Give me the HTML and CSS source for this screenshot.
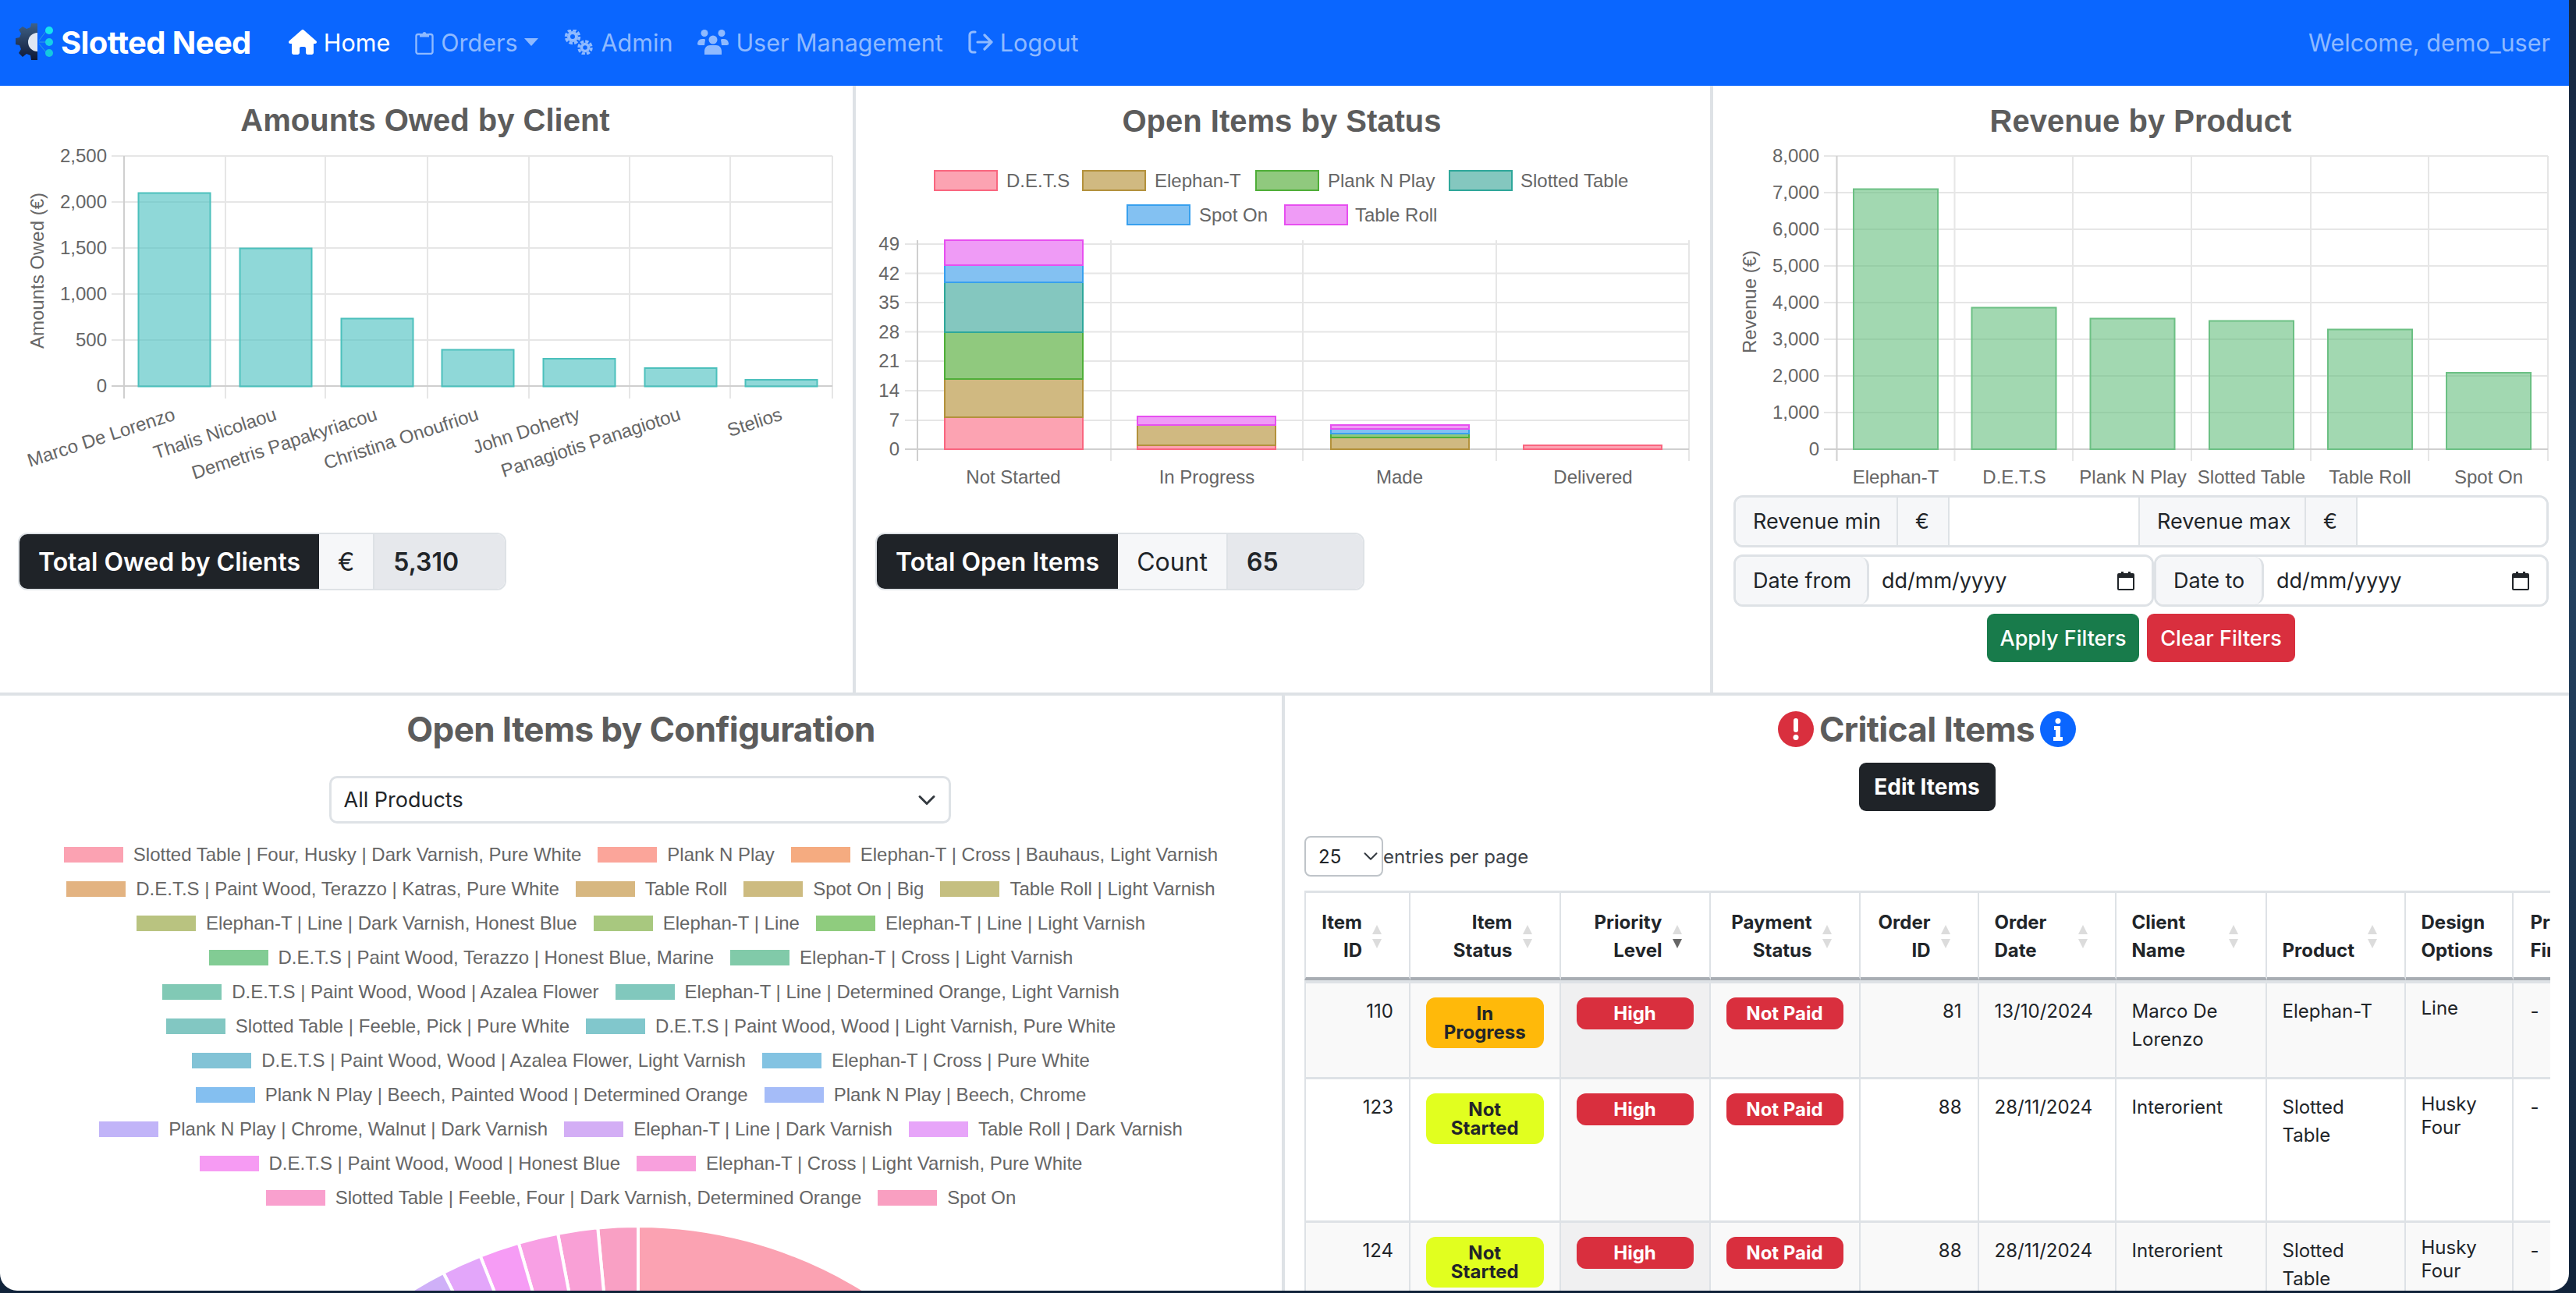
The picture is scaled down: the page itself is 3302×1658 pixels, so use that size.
FILE: index.html
```
<!DOCTYPE html>
<html lang="en">
<head>
<meta charset="utf-8">
<title>Slotted Need</title>
<link rel="stylesheet" href="styles.css">
</head>
<body>
<div class="window">
  <nav class="navbar">
    <a class="brand">
      <svg class="logo" viewBox="20 30 50 48" width="50" height="48">
        <defs><linearGradient id="lg" x1="0" y1="0" x2="0" y2="1"><stop offset="0" stop-color="#3f6185"/><stop offset="1" stop-color="#0d1736"/></linearGradient></defs>
        <path fill="url(#lg)" d="M48 30V77H40L39 71 34 69 29 73 24 68 27 63 25 58 20 57V49L25 48 27 43 24 38 29 34 34 37 39 35 40 30Z"/>
        <path fill="#dfe7f3" d="M48 42V66A12 12 0 0 1 48 42Z"/>
        <path stroke="#2f9fe0" stroke-width="1" fill="none" d="M50 52 59 40M50 54H59M50 56 59 67"/>
        <circle cx="63" cy="39" r="5" fill="#16e3f0"/><circle cx="63" cy="54" r="5" fill="#16cfe8"/><circle cx="63" cy="68" r="5" fill="#14c8e0"/>
      </svg>
      <span>Slotted Need</span>
    </a>
    <ul class="nav-list">
      <li class="nav-link active">
        <svg class="ic-home" viewBox="0 0 576 512" width="36" height="32"><path fill="currentColor" d="M575.8 255.5c0 18-15 32.1-32 32.1h-32l.7 160.2c0 2.7-.2 5.4-.5 8.1V472c0 22.1-17.9 40-40 40H456c-1.1 0-2.2 0-3.3-.1c-1.4 .1-2.8 .1-4.2 .1H416 392c-22.1 0-40-17.9-40-40V448 384c0-17.7-14.3-32-32-32H256c-17.7 0-32 14.3-32 32v64 24c0 22.1-17.9 40-40 40H160 128.1c-1.5 0-3-.1-4.5-.2c-1.2 .1-2.4 .2-3.6 .2H104c-22.1 0-40-17.9-40-40V360c0-.9 0-1.9 .1-2.8V287.6H32c-18 0-32-14-32-32.1c0-9 3-17 10-24L266.4 8c7-7 15-8 22-8s15 2 21 7L564.8 231.5c8 7 12 15 11 24z"/></svg>
        <span>Home</span>
      </li>
      <li class="nav-link">
        <svg viewBox="0 0 24 32" width="24" height="32"><path fill="none" stroke="currentColor" stroke-width="2.4" d="M6.5 6H4a2.5 2.5 0 0 0-2.5 2.5v20A2.5 2.5 0 0 0 4 31h16a2.5 2.5 0 0 0 2.5-2.5v-20A2.5 2.5 0 0 0 20 6h-2.500"/><path fill="currentColor" d="M6 5h3.500a2.600 2.600 0 0 1 5 0H18v4.500H6z"/></svg>
        <span>Orders</span>
        <i class="caret"></i>
      </li>
      <li class="nav-link">
        <svg viewBox="0 0 40 32" width="40" height="32" fill="none" stroke="currentColor"><circle cx="12" cy="9" r="5" stroke-width="4"/><circle cx="12" cy="9" r="8.500" stroke-width="3.500" stroke-dasharray="4.500 2.170"/><circle cx="28" cy="23" r="4.500" stroke-width="3.500"/><circle cx="28" cy="23" r="8" stroke-width="3.500" stroke-dasharray="4.200 2.080"/></svg>
        <span>Admin</span>
      </li>
      <li class="nav-link">
        <svg viewBox="0 0 40 32" width="40" height="32" fill="currentColor"><circle cx="9" cy="4.500" r="4.500"/><circle cx="31" cy="4.500" r="4.500"/><circle cx="20" cy="13" r="5.500"/><path d="M0 19c0-4 2-7 6-7h3l1 1-1 7H2zM40 19c0-4-2-7-6-7h-3l-1 1 1 7h7zM9 32v-4c0-5 3-8 7-8h8c4 0 7 3 7 8v4z"/></svg>
        <span>User Management</span>
      </li>
      <li class="nav-link">
        <svg viewBox="0 0 32 32" width="32" height="32" fill="none" stroke="currentColor" stroke-width="3.200" stroke-linecap="round" stroke-linejoin="round"><path d="M9 3H6a4 4 0 0 0-4 4v18a4 4 0 0 0 4 4h3M12 16H30M21 7l9 9-9 9"/></svg>
        <span>Logout</span>
      </li>
    </ul>
    <span class="welcome">Welcome, demo_user</span>
  </nav>

  <section class="row-top">
    <div class="panel panel-a">
      <svg class="chart" viewBox="0 110 1093 573" width="1093" height="573">
        <text class="chart-title" x="545" y="168">Amounts Owed by Client</text>
        <path class="grid" d="M143 200H1067M143 259H1067M143 318H1067M143 377H1067M143 436H1067M289 200V511M417 200V511M548 200V511M678 200V511M807 200V511M936 200V511M1067 200V511"/>
        <path class="axis" d="M143 495H1067M159 200V511"/>
        <g class="ytick" text-anchor="end">
          <text x="137" y="208">2,500</text><text x="137" y="267">2,000</text><text x="137" y="326">1,500</text><text x="137" y="385">1,000</text><text x="137" y="444">500</text><text x="137" y="503">0</text>
        </g>
        <text class="axis-label" transform="translate(56 347) rotate(-90)">Amounts Owed (€)</text>
        <g class="bar-teal">
          <rect x="177.500" y="247.500" width="92" height="248"/><rect x="307.500" y="318.500" width="92" height="177"/><rect x="437.500" y="408.500" width="92" height="87"/><rect x="566.500" y="448.500" width="92" height="47"/><rect x="696.500" y="460" width="92" height="35.500"/><rect x="826.500" y="472" width="92" height="23.500"/><rect x="955.500" y="487" width="92" height="8.500"/>
        </g>
        <g class="ytick" text-anchor="end">
          <text transform="translate(226 538) rotate(-18)">Marco De Lorenzo</text>
          <text transform="translate(356 538) rotate(-18)">Thalis Nicolaou</text>
          <text transform="translate(485 538) rotate(-18)">Demetris Papakyriacou</text>
          <text transform="translate(615 538) rotate(-18)">Christina Onoufriou</text>
          <text transform="translate(745 538) rotate(-18)">John Doherty</text>
          <text transform="translate(874 538) rotate(-18)">Panagiotis Panagiotou</text>
          <text transform="translate(1004 538) rotate(-18)">Stelios</text>
        </g>
      </svg>
      <div class="total-group total-a">
        <span class="tg-dark">Total Owed by Clients</span>
        <span class="tg-unit tg-euro">€</span>
        <span class="tg-val">5,310</span>
      </div>
    </div>

    <div class="panel panel-b">
      <svg class="chart" viewBox="1097 110 1096 573" width="1096" height="573">
        <text class="chart-title" x="1643" y="169">Open Items by Status</text>
        <g class="leg-box">
          <rect class="s-dets" x="1198" y="219" width="80" height="25"/><rect class="s-ele" x="1388" y="219" width="80" height="25"/><rect class="s-pln" x="1610" y="219" width="80" height="25"/><rect class="s-slo" x="1858" y="219" width="80" height="25"/>
          <rect class="s-spo" x="1445" y="263" width="80" height="25"/><rect class="s-tab" x="1647" y="263" width="80" height="25"/>
        </g>
        <g class="ytick">
          <text x="1290" y="240">D.E.T.S</text><text x="1480" y="240">Elephan-T</text><text x="1702" y="240">Plank N Play</text><text x="1949" y="240">Slotted Table</text>
          <text x="1537" y="284">Spot On</text><text x="1737" y="284">Table Roll</text>
        </g>
        <path class="grid" d="M1160 313H2165M1160 350.500H2165M1160 388H2165M1160 425.500H2165M1160 463H2165M1160 501H2165M1160 539H2165M1424 308V591M1670 308V591M1918 308V591M2165 308V591"/>
        <path class="axis" d="M1160 576H2165M1176 308V591"/>
        <g class="ytick" text-anchor="end">
          <text x="1153" y="321">49</text><text x="1153" y="359">42</text><text x="1153" y="396">35</text><text x="1153" y="434">28</text><text x="1153" y="471">21</text><text x="1153" y="509">14</text><text x="1153" y="547">7</text><text x="1153" y="584">0</text>
        </g>
        <g class="stack">
          <rect class="s-dets" x="1211" y="535" width="177" height="41"/><rect class="s-ele" x="1211" y="486" width="177" height="49"/><rect class="s-pln" x="1211" y="426" width="177" height="60"/><rect class="s-slo" x="1211" y="362" width="177" height="64"/><rect class="s-spo" x="1211" y="340" width="177" height="22"/><rect class="s-tab" x="1211" y="308" width="177" height="32"/>
          <rect class="s-dets" x="1458" y="571" width="177" height="5"/><rect class="s-ele" x="1458" y="545" width="177" height="26"/><rect class="s-tab" x="1458" y="534" width="177" height="11"/>
          <rect class="s-ele" x="1706" y="561" width="177" height="15"/><rect class="s-pln" x="1706" y="556" width="177" height="5"/><rect class="s-spo" x="1706" y="550" width="177" height="6"/><rect class="s-tab" x="1706" y="545" width="177" height="5"/>
          <rect class="s-dets" x="1953" y="571" width="177" height="5"/>
        </g>
        <g class="ytick" text-anchor="middle">
          <text x="1299" y="620">Not Started</text><text x="1547" y="620">In Progress</text><text x="1794" y="620">Made</text><text x="2042" y="620">Delivered</text>
        </g>
      </svg>
      <div class="total-group total-b">
        <span class="tg-dark">Total Open Items</span>
        <span class="tg-unit tg-count">Count</span>
        <span class="tg-val">65</span>
      </div>
    </div>

    <div class="panel panel-c">
      <svg class="chart" viewBox="2196 110 1097 525" width="1097" height="525">
        <text class="chart-title" x="2744" y="169">Revenue by Product</text>
        <path class="grid" d="M2338 200H3266M2338 247H3266M2338 294H3266M2338 341H3266M2338 388H3266M2338 435H3266M2338 482H3266M2338 529H3266M2505.500 200V591M2657 200V591M2809 200V591M2962 200V591M3113 200V591M3266 200V591"/>
        <path class="axis" d="M2338 576H3266M2354.500 200V591"/>
        <g class="ytick" text-anchor="end">
          <text x="2332" y="208">8,000</text><text x="2332" y="255">7,000</text><text x="2332" y="302">6,000</text><text x="2332" y="349">5,000</text><text x="2332" y="396">4,000</text><text x="2332" y="443">3,000</text><text x="2332" y="490">2,000</text><text x="2332" y="537">1,000</text><text x="2332" y="584">0</text>
        </g>
        <text class="axis-label" transform="translate(2251 387) rotate(-90)">Revenue (€)</text>
        <g class="bar-green">
          <rect x="2376" y="242.500" width="108" height="333.500"/><rect x="2527.500" y="394.500" width="108" height="181.500"/><rect x="2679.500" y="408.500" width="108" height="167.500"/><rect x="2832" y="411.500" width="108" height="164.500"/><rect x="2984" y="422.500" width="108" height="153.500"/><rect x="3136" y="478" width="108" height="98"/>
        </g>
        <g class="ytick" text-anchor="middle">
          <text x="2430" y="620">Elephan-T</text><text x="2582" y="620">D.E.T.S</text><text x="2734" y="620">Plank N Play</text><text x="2886" y="620">Slotted Table</text><text x="3038" y="620">Table Roll</text><text x="3190" y="620">Spot On</text>
        </g>
      </svg>
      <div class="filters">
        <div class="f-row">
          <span class="f-add f-w-rev">Revenue min</span><span class="f-add f-w-eur">€</span><span class="f-field f-grow"></span>
          <span class="f-add f-w-revmax">Revenue max</span><span class="f-add f-w-eur">€</span><span class="f-field f-grow"></span>
        </div>
        <div class="f-row f-dates">
          <div class="f-date f-date-from">
            <span class="f-add f-w-from">Date from</span>
            <span class="f-field f-grow f-datefield">dd/mm/yyyy
              <svg viewBox="0 0 22 24" width="22" height="24"><path fill="currentColor" d="M5 0h3v2h6V0h3v2h3a2 2 0 0 1 2 2v18a2 2 0 0 1-2 2H2a2 2 0 0 1-2-2V4a2 2 0 0 1 2-2h3zM2 8v14h18V8z"/></svg>
            </span>
          </div>
          <div class="f-date f-date-to">
            <span class="f-add f-w-to">Date to</span>
            <span class="f-field f-grow f-datefield">dd/mm/yyyy
              <svg viewBox="0 0 22 24" width="22" height="24"><path fill="currentColor" d="M5 0h3v2h6V0h3v2h3a2 2 0 0 1 2 2v18a2 2 0 0 1-2 2H2a2 2 0 0 1-2-2V4a2 2 0 0 1 2-2h3zM2 8v14h18V8z"/></svg>
            </span>
          </div>
        </div>
        <div class="f-actions">
          <button class="btn btn-green">Apply Filters</button>
          <button class="btn btn-red">Clear Filters</button>
        </div>
      </div>
    </div>
  </section>

  <section class="row-bottom">
    <div class="panel-config">
      <h2 class="section-title">Open Items by Configuration</h2>
      <div class="product-select">
        <span>All Products</span>
        <svg viewBox="0 0 16 16" width="24" height="24"><path fill="none" stroke="#343a40" stroke-width="2" stroke-linecap="round" stroke-linejoin="round" d="M2 5l6 6 6-6"/></svg>
      </div>
      <div class="legend">
        <div class="leg-row"><span class="leg-item"><i class="c1"></i>Slotted Table | Four, Husky | Dark Varnish, Pure White</span><span class="leg-item"><i class="c2"></i>Plank N Play</span><span class="leg-item"><i class="c3"></i>Elephan-T | Cross | Bauhaus, Light Varnish</span></div>
        <div class="leg-row"><span class="leg-item"><i class="c4"></i>D.E.T.S | Paint Wood, Terazzo | Katras, Pure White</span><span class="leg-item"><i class="c5"></i>Table Roll</span><span class="leg-item"><i class="c6"></i>Spot On | Big</span><span class="leg-item"><i class="c7"></i>Table Roll | Light Varnish</span></div>
        <div class="leg-row"><span class="leg-item"><i class="c8"></i>Elephan-T | Line | Dark Varnish, Honest Blue</span><span class="leg-item"><i class="c9"></i>Elephan-T | Line</span><span class="leg-item"><i class="c10"></i>Elephan-T | Line | Light Varnish</span></div>
        <div class="leg-row"><span class="leg-item"><i class="c11"></i>D.E.T.S | Paint Wood, Terazzo | Honest Blue, Marine</span><span class="leg-item"><i class="c12"></i>Elephan-T | Cross | Light Varnish</span></div>
        <div class="leg-row"><span class="leg-item"><i class="c13"></i>D.E.T.S | Paint Wood, Wood | Azalea Flower</span><span class="leg-item"><i class="c14"></i>Elephan-T | Line | Determined Orange, Light Varnish</span></div>
        <div class="leg-row"><span class="leg-item"><i class="c15"></i>Slotted Table | Feeble, Pick | Pure White</span><span class="leg-item"><i class="c16"></i>D.E.T.S | Paint Wood, Wood | Light Varnish, Pure White</span></div>
        <div class="leg-row"><span class="leg-item"><i class="c17"></i>D.E.T.S | Paint Wood, Wood | Azalea Flower, Light Varnish</span><span class="leg-item"><i class="c18"></i>Elephan-T | Cross | Pure White</span></div>
        <div class="leg-row"><span class="leg-item"><i class="c19"></i>Plank N Play | Beech, Painted Wood | Determined Orange</span><span class="leg-item"><i class="c20"></i>Plank N Play | Beech, Chrome</span></div>
        <div class="leg-row"><span class="leg-item"><i class="c21"></i>Plank N Play | Chrome, Walnut | Dark Varnish</span><span class="leg-item"><i class="c22"></i>Elephan-T | Line | Dark Varnish</span><span class="leg-item"><i class="c23"></i>Table Roll | Dark Varnish</span></div>
        <div class="leg-row"><span class="leg-item"><i class="c24"></i>D.E.T.S | Paint Wood, Wood | Honest Blue</span><span class="leg-item"><i class="c25"></i>Elephan-T | Cross | Light Varnish, Pure White</span></div>
        <div class="leg-row"><span class="leg-item"><i class="c26"></i>Slotted Table | Feeble, Four | Dark Varnish, Determined Orange</span><span class="leg-item"><i class="c27"></i>Spot On</span></div>
      </div>
      <svg class="pie" viewBox="0 1560 1643 100" width="1643" height="100">
        <g stroke="#fff" stroke-width="4">
          <path fill="#fba2b2" d="M818 2122V1572A550 550 0 0 1 1294 1847Z"/>
          <path fill="#f9a0c4" d="M818 2122V1572A550 550 0 0 0 766.200 1574.400Z"/>
          <path fill="#f9a0d6" d="M818 2122L766.200 1574.400A550 550 0 0 0 715 1581.700Z"/>
          <path fill="#f8a0e4" d="M818 2122L715 1581.700A550 550 0 0 0 664.600 1593.800Z"/>
          <path fill="#f69cf5" d="M818 2122L664.600 1593.800A550 550 0 0 0 615.600 1610.600Z"/>
          <path fill="#e3a6fa" d="M818 2122L615.600 1610.600A550 550 0 0 0 568.300 1632Z"/>
          <path fill="#cfb0f8" d="M818 2122L568.300 1632A550 550 0 0 0 523.300 1657.600Z"/>
        </g>
      </svg>
    </div>

    <div class="panel-critical">
      <h2 class="section-title title-icons">
        <svg viewBox="0 0 46 46" width="46" height="46"><circle cx="23" cy="23" r="23" fill="#d92f3e"/><rect x="20" y="9" width="6" height="18" rx="3" fill="#fff"/><circle cx="23" cy="33.500" r="3.500" fill="#fff"/></svg>
        <span>Critical Items</span>
        <svg viewBox="0 0 46 46" width="46" height="46"><circle cx="23" cy="23" r="23" fill="#0a66ff"/><circle cx="23" cy="12.500" r="3.500" fill="#fff"/><path fill="#fff" d="M18 19h8v14h3v5H17v-5h3v-9h-2z"/></svg>
      </h2>
      <div class="edit-wrap"><button class="btn btn-dark">Edit Items</button></div>
      <div class="entries">
        <div class="entries-select"><span>25</span><svg viewBox="0 0 16 16" width="20" height="20"><path fill="none" stroke="#343a40" stroke-width="1.600" stroke-linecap="round" stroke-linejoin="round" d="M2 5l6 6 6-6"/></svg></div>
        <span>entries per page</span>
      </div>
      <div class="table-wrap">
        <table class="items">
          <thead>
            <tr>
              <th class="w1 r sort">Item<br>ID<i class="up"></i><i class="dn"></i></th>
              <th class="w2 r sort">Item<br>Status<i class="up"></i><i class="dn"></i></th>
              <th class="w3 r sort">Priority<br>Level<i class="up"></i><i class="dn on"></i></th>
              <th class="w4 r sort">Payment<br>Status<i class="up"></i><i class="dn"></i></th>
              <th class="w5 r sort">Order<br>ID<i class="up"></i><i class="dn"></i></th>
              <th class="w6 sort">Order<br>Date<i class="up"></i><i class="dn"></i></th>
              <th class="w7 sort">Client<br>Name<i class="up"></i><i class="dn"></i></th>
              <th class="w8 sort">Product<i class="up"></i><i class="dn"></i></th>
              <th class="w9">Design<br>Options</th>
              <th class="w10 last">Product<br>Finish</th>
            </tr>
          </thead>
          <tbody>
            <tr class="odd h1">
              <td class="r">110</td><td><span class="badge warn">In<br>Progress</span></td><td class="sorted"><span class="badge danger">High</span></td><td><span class="badge danger">Not Paid</span></td><td class="r">81</td><td>13/10/2024</td><td>Marco De Lorenzo</td><td>Elephan-T</td><td class="tight">Line</td><td class="last">-</td>
            </tr>
            <tr class="h2">
              <td class="r">123</td><td><span class="badge lime">Not<br>Started</span></td><td class="sorted"><span class="badge danger">High</span></td><td><span class="badge danger">Not Paid</span></td><td class="r">88</td><td>28/11/2024</td><td>Interorient</td><td>Slotted Table</td><td class="tight">Husky<br>Four</td><td class="last">-</td>
            </tr>
            <tr class="odd">
              <td class="r">124</td><td><span class="badge lime">Not<br>Started</span></td><td class="sorted"><span class="badge danger">High</span></td><td><span class="badge danger">Not Paid</span></td><td class="r">88</td><td>28/11/2024</td><td>Interorient</td><td>Slotted Table</td><td class="tight">Husky<br>Four</td><td class="last">-</td>
            </tr>
          </tbody>
        </table>
      </div>
    </div>
  </section>
</div>
</body>
</html>
```
FILE: styles.css
```
* { box-sizing: border-box; }
html, body { margin: 0; height: 100%; }
body {
  width: 3302px; height: 1658px; overflow: hidden;
  background: linear-gradient(180deg, #16263f 0%, #24415f 45%, #11233a 100%);
  font-family: Inter, "Liberation Sans", sans-serif; color: #212529;
}
.window {
  width: 3293px; height: 1655px; background: #fff; overflow: hidden;
  border-radius: 0 0 22px 22px; display: flex; flex-direction: column;
}

/* navbar */
.navbar { height: 110px; flex: none; background: #0a66ff; display: flex; align-items: center; padding: 0 24px 2px 20px; }
.brand { display: flex; align-items: center; gap: 8px; color: #fff; font-weight: 700; font-size: 40px; letter-spacing: -.6px; }
.logo { display: block; }
.nav-list { list-style: none; display: flex; align-items: center; gap: 32px; margin: 0 0 0 48px; padding: 0; }
.nav-link { display: flex; align-items: center; gap: 9px; font-size: 30.500px; color: #8fbaff; }
.nav-link.active { color: #fff; }
.nav-link svg { display: block; }
.caret { width: 0; height: 0; border-left: 9px solid transparent; border-right: 9px solid transparent; border-top: 10px solid #8fbaff; margin-left: -1px; }
.welcome { margin-left: auto; font-size: 30.500px; color: #8fbaff; }

/* rows */
.row-top { display: grid; grid-template-columns: 1097px 1099px 1097px; height: 782px; flex: none; border-bottom: 4px solid #dee2e6; }
.row-bottom { display: grid; grid-template-columns: 1647px 1646px; flex: 1; min-height: 0; }
.panel-a, .panel-b { border-right: 4px solid #dee2e6; }
.chart { display: block; }
.chart-title { font: 700 40px "Liberation Sans", sans-serif; fill: #5c5c5c; text-anchor: middle; }
.ytick text, .ytick { font: 24px "Liberation Sans", sans-serif; fill: #666; }
.axis-label { font: 24px "Liberation Sans", sans-serif; fill: #666; text-anchor: middle; }
.grid { stroke: #e6e6e6; stroke-width: 2; fill: none; }
.axis { stroke: #cfcfcf; stroke-width: 2; fill: none; }
.bar-teal rect { fill: rgba(75, 192, 192, .62); stroke: #4cc0bc; stroke-width: 2; }
.bar-green rect { fill: rgba(100, 190, 125, .6); stroke: #6cc084; stroke-width: 2; }
.s-dets { fill: #fca3b2; stroke: #f9667f; }
.s-ele { fill: #d0b981; stroke: #b3913c; }
.s-pln { fill: #90c97e; stroke: #4fae38; }
.s-slo { fill: #84c7bf; stroke: #2fa79a; }
.s-spo { fill: #83c1f2; stroke: #38a0ee; }
.s-tab { fill: #ef9bf6; stroke: #e74ff0; }
.stack rect, .leg-box rect { stroke-width: 2; }

/* total groups */
.total-group { display: flex; height: 74px; border: 2px solid #dee2e6; border-radius: 12px; overflow: hidden; font-size: 32px; }
.total-a { margin-left: 23px; width: 626px; }
.total-b { margin-left: 25px; width: 627px; }
.total-group span { display: flex; align-items: center; padding: 0 24px; }
.tg-dark { background: #1f2328; color: #fff; font-weight: 600; flex: none; }
.tg-unit { background: #f6f7f9; border-right: 2px solid #dee2e6; flex: none; }
.tg-val { background: #e6e8ec; font-weight: 600; flex: 1; }

/* filters */
.filters { padding: 0 26px; font-size: 27px; }
.f-row { display: flex; height: 67px; border: 3px solid #dee2e6; border-radius: 12px; overflow: hidden; }
.f-dates { border: 0; border-radius: 0; overflow: visible; margin-top: 9px; }
.f-add { display: flex; align-items: center; padding: 0 0 0 22px; background: #f6f7f9; border-right: 2px solid #dee2e6; flex: none; height: 100%; white-space: nowrap; }
.f-w-rev { width: 208px; } .f-w-eur { width: 66px; } .f-w-revmax { width: 215px; border-left: 2px solid #dee2e6; }
.f-field { display: block; background: #fff; }
.f-grow { flex: 1; min-width: 0; }
.f-date { flex: none; display: flex; height: 67px; border: 3px solid #dee2e6; border-radius: 12px; overflow: hidden; }
.f-date-from { width: 539px; }
.f-date-to { width: 506px; }
.f-w-from { width: 171px; border-right: 3px solid #dee2e6; border-radius: 0 12px 12px 0; }
.f-w-to { width: 138px; border-right: 3px solid #dee2e6; border-radius: 0 12px 12px 0; }
.f-datefield { display: flex; align-items: center; justify-content: space-between; padding: 0 22px 0 16px; }
.f-actions { display: flex; justify-content: center; gap: 10px; margin-top: 9px; }
.btn { border: 0; font: 500 27px Inter, sans-serif; color: #fff; border-radius: 9px; height: 62px; padding: 0; }
.btn-green { background: #187b4b; width: 195px; }
.btn-red { background: #d92f3e; width: 190px; }
.btn-dark { background: #1f2328; width: 175px; font-weight: 700; font-size: 28px; }

/* config panel */
.panel-config { border-right: 4px solid #dee2e6; padding-top: 19px; overflow: hidden; }
.section-title { margin: 0; font-size: 44px; line-height: 48px; font-weight: 700; color: #5c5c5c; text-align: center; letter-spacing: -.6px; }
.product-select { width: 797px; height: 61px; margin: 36px auto 0; border: 3px solid #dee2e6; border-radius: 10px; display: flex; align-items: center; justify-content: space-between; padding: 0 16px; font-size: 27px; position: relative; left: -1.500px; }
.legend { margin-top: 18px; font: 24px/44px "Liberation Sans", sans-serif; color: #666; }
.leg-row { display: flex; justify-content: center; gap: 21px; height: 44px; }
.leg-item { display: flex; align-items: center; gap: 13px; white-space: nowrap; }
.leg-item i { width: 76px; height: 20px; flex: none; }
.c1 { background: #fba2b2; } .c2 { background: #fba59a; } .c3 { background: #f5ab80; } .c4 { background: #e3b381; } .c5 { background: #d7b780; } .c6 { background: #cdbb80; } .c7 { background: #c5bf80; } .c8 { background: #b9c380; } .c9 { background: #a8c87f; } .c10 { background: #8fcc7e; } .c11 { background: #82cc94; } .c12 { background: #81caa9; } .c13 { background: #81c9b5; } .c14 { background: #81c8bd; } .c15 { background: #82c7c2; } .c16 { background: #81c7cc; } .c17 { background: #82c3d6; } .c18 { background: #83c3e2; } .c19 { background: #84bff0; } .c20 { background: #a5bcf8; } .c21 { background: #c1b4f8; } .c22 { background: #d3aef5; } .c23 { background: #e7a5f9; } .c24 { background: #f69bf3; } .c25 { background: #f8a0dd; } .c26 { background: #f9a0ce; } .c27 { background: #f99fc1; }
.pie { display: block; margin-top: 2px; }

/* critical panel */
.panel-critical { padding-top: 19px; overflow: hidden; }
.title-icons { display: flex; justify-content: center; align-items: center; gap: 7px; }
.edit-wrap { display: flex; justify-content: center; margin-top: 19px; }
.entries { display: flex; align-items: center; margin: 32px 0 0 25px; height: 52px; font-size: 24px; color: #3c4248; }
.entries-select { width: 101px; height: 52px; border: 2px solid #bfc4c9; border-radius: 8px; display: flex; align-items: center; justify-content: space-between; padding: 0 4px 0 16px; color: #212529; }
.table-wrap { width: 1597px; margin: 18px 0 0 25px; overflow: hidden; }
.items { border-collapse: separate; border-spacing: 0; table-layout: fixed; width: 1797px; font-size: 24px; line-height: 36px; }
.items th, .items td { padding: 18px 20px 17px; border-right: 2px solid #dee2e6; border-bottom: 3px solid #dee2e6; vertical-align: top; text-align: left; }
.items th:first-child, .items td:first-child { border-left: 2px solid #dee2e6; }
.items th { position: relative; vertical-align: bottom; font-weight: 700; color: #212529; border-top: 3px solid #dee2e6; border-bottom: 4px solid #a8adb3; padding: 18px 20px 16px; height: 115px; }
.items th.sort { padding-right: 60px; }
.items .r { text-align: right; }
.items .last { padding-left: 22px; }
.items tbody tr:first-child td { border-top: 4px solid #dee2e6; }
.w1 { width: 136px; } .w2 { width: 192.500px; } .w3 { width: 192px; } .w4 { width: 192px; } .w5 { width: 152px; } .w6 { width: 176px; } .w7 { width: 193px; } .w8 { width: 178px; } .w9 { width: 138px; } .w10 { width: 248px; }
.up, .dn { position: absolute; right: 35px; width: 0; height: 0; border-left: 6px solid transparent; border-right: 6px solid transparent; }
.up { top: 41px; border-bottom: 12px solid #dcdcdc; }
.dn { top: 59px; border-top: 12px solid #dcdcdc; }
.dn.on { border-top-color: #666; }
.odd td { background: #f9f9f9; }
.odd td.sorted { background: #f0f0f1; }
.h2 td.sorted { background: #f9f9f9; }
.h1 td { height: 127px; }
.h2 td { height: 184px; }
.items td.tight { line-height: 30px; padding-top: 17px; }
.badge { display: block; text-align: center; font-size: 24px; font-weight: 700; line-height: 24px; padding: 8.500px 6px; border-radius: 12px; }
.warn { background: #ffb90a; }
.lime { background: #e1ff1f; }
.danger { background: #d92f3e; color: #fff; }
```
